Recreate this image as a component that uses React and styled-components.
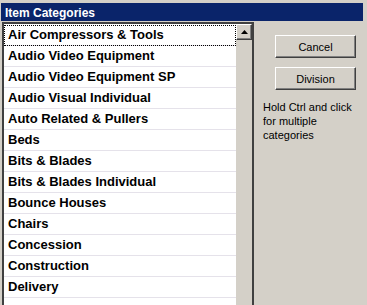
import React from 'react';
import styled, { createGlobalStyle } from 'styled-components';

const categories = [
  'Air Compressors & Tools',
  'Audio Video Equipment',
  'Audio Video Equipment SP',
  'Audio Visual Individual',
  'Auto Related & Pullers',
  'Beds',
  'Bits & Blades',
  'Bits & Blades Individual',
  'Bounce Houses',
  'Chairs',
  'Concession',
  'Construction',
  'Delivery',
];

const GlobalStyle = createGlobalStyle`
  html, body {
    margin: 0;
    padding: 0;
    background: #d4d0c8;
  }
`;

const Window = styled.div`
  width: 367px;
  height: 305px;
  overflow: hidden;
  background: #d4d0c8;
  font-family: "Liberation Sans", Arial, sans-serif;
  padding-top: 3px;
  box-sizing: border-box;
`;

const TitleBar = styled.div`
  height: 18px;
  margin: 0 4px 0 1px;
  padding-left: 4px;
  background: #0a246a;
  color: #fff;
  font-weight: bold;
  font-size: 12px;
  line-height: 20px;
  overflow: hidden;
`;

const Body = styled.div`
  display: flex;
  margin-top: 1px;
  padding-left: 2px;
`;

const ListBox = styled.div`
  display: flex;
  width: 252px;
  height: 290px;
  box-sizing: border-box;
  border-top: 2px solid #404040;
  border-left: 2px solid #404040;
  border-right: 2px solid #404040;
  box-shadow: inset 1px 1px 0 #808080;
`;

const Items = styled.ul`
  list-style: none;
  margin: 0;
  padding: 1px 0 0;
  width: 232px;
  background: #fff;
  overflow: hidden;
`;

const Item = styled.li`
  height: 20px;
  line-height: 20px;
  padding-left: 4px;
  border-bottom: 1px solid #e5e2ea;
  font-size: 13px;
  font-weight: bold;
  color: #000;
  white-space: nowrap;
  outline: ${(p) => (p.$focused ? '1px dotted #000' : 'none')};
  outline-offset: -1px;
`;

const ScrollBar = styled.div`
  width: 16px;
  background: #d4d0c8;
  display: flex;
  flex-direction: column;
`;

const ArrowButton = styled.div`
  width: 16px;
  height: 16px;
  box-sizing: border-box;
  background: #d4d0c8;
  border-top: 1px solid #fff;
  border-left: 1px solid #fff;
  border-right: 1px solid #404040;
  border-bottom: 1px solid #404040;
  box-shadow: inset -1px -1px 0 #808080;
  display: flex;
  align-items: center;
  justify-content: center;
`;

const SidePanel = styled.div`
  flex: 1;
  padding: 13px 0 0 9px;
`;

const Button = styled.button`
  display: block;
  width: 81px;
  height: 23px;
  margin: 0 0 9px 12px;
  padding: 0;
  background: #d4d0c8;
  border-top: 1px solid #fff;
  border-left: 1px solid #fff;
  border-right: 1px solid #404040;
  border-bottom: 1px solid #404040;
  box-shadow: inset -1px -1px 0 #808080;
  font-family: "Liberation Sans", Arial, sans-serif;
  font-size: 11px;
  color: #000;
`;

const Hint = styled.p`
  margin: 10px 0 0;
  width: 100px;
  font-size: 11px;
  line-height: 14px;
  color: #000;
`;

export default function App() {
  return (
    <>
      <GlobalStyle />
      <Window>
        <TitleBar>Item Categories</TitleBar>
        <Body>
          <ListBox>
            <Items>
              {categories.map((name, i) => (
                <Item key={name} $focused={i === 0}>
                  {name}
                </Item>
              ))}
            </Items>
            <ScrollBar>
              <ArrowButton>
                <svg width="7" height="4" viewBox="0 0 7 4">
                  <path d="M3.5 0 L7 4 L0 4 Z" fill="#000" />
                </svg>
              </ArrowButton>
            </ScrollBar>
          </ListBox>
          <SidePanel>
            <Button>Cancel</Button>
            <Button>Division</Button>
            <Hint>Hold Ctrl and click for multiple categories</Hint>
          </SidePanel>
        </Body>
      </Window>
    </>
  );
}
